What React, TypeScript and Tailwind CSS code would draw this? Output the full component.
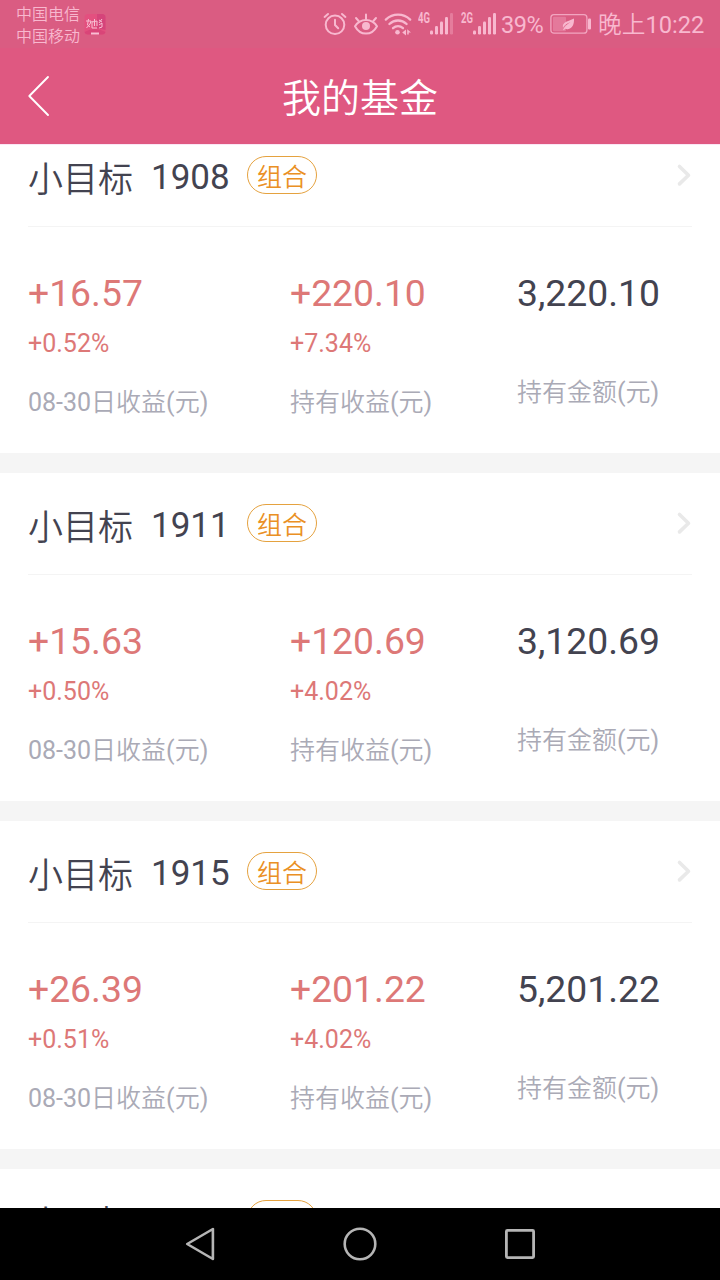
const SANS = "font-[Roboto,'Noto_Sans_CJK_SC_DemiLight','Noto_Sans_CJK_SC',sans-serif]";

type Fund = {
  code: string;
  daily: string;
  dailyRate: string;
  profit: string;
  profitRate: string;
  amount: string;
};

const funds: Fund[] = [
  { code: "1908", daily: "+16.57", dailyRate: "+0.52%", profit: "+220.10", profitRate: "+7.34%", amount: "3,220.10" },
  { code: "1911", daily: "+15.63", dailyRate: "+0.50%", profit: "+120.69", profitRate: "+4.02%", amount: "3,120.69" },
  { code: "1915", daily: "+26.39", dailyRate: "+0.51%", profit: "+201.22", profitRate: "+4.02%", amount: "5,201.22" },
];

function AlarmIcon() {
  return (
    <svg className="h-6 w-6 shrink-0" viewBox="0 0 24 24" fill="none" stroke="currentColor" strokeWidth="2" strokeLinecap="round">
      <circle cx="12" cy="12.8" r="9.3" />
      <path d="M12 7.8v5.2l3.2 3.2" />
      <path d="M1.6 4.9 5 2M22.4 4.9 19 2" />
    </svg>
  );
}

function EyeIcon() {
  return (
    <svg className="h-6 w-6 shrink-0" viewBox="0 0 24 24" fill="none" stroke="currentColor" strokeWidth="2" strokeLinecap="round">
      <path d="M1 14.2C4 9.6 7.8 8 12 8s8 1.600 11 6.200C20 19.800 16.200 21.600 12 21.600S4 19.800 1 14.200Z" />
      <circle cx="12" cy="14" r="4" fill="currentColor" stroke="none" />
      <path d="M12 7.500V2.400M4.600 9 2 6M19.400 9 22 6" />
    </svg>
  );
}

function WifiIcon() {
  return (
    <svg className="h-6 w-7 shrink-0" viewBox="0 0 28 24" fill="none" stroke="currentColor" strokeWidth="2.300" strokeLinecap="round">
      <path d="M1.800 7.600c7-6.600 17.400-6.600 24.400 0" />
      <path d="M5.400 12c5-4.700 12.200-4.700 17.200 0" />
      <path d="M9 16.200c3-2.700 7-2.700 10 0" />
      <circle cx="13.500" cy="20.300" r="2.300" fill="currentColor" stroke="none" />
      <path d="M22 17.400v6.200l-3.800-3.100ZM23.200 17.200l3.800 3.200h-2.300v2.200h-1.500Z" fill="currentColor" stroke="none" />
    </svg>
  );
}

function Signal({ label, weakLast }: { label: string; weakLast?: boolean }) {
  return (
    <div className="flex h-6 w-[37px] shrink-0 items-start">
      <span className="w-3 origin-left scale-x-[0.68] font-['Roboto'] text-[14px] leading-[13px] font-bold">{label}</span>
      <svg className="h-6 w-6 shrink-0" viewBox="0 0 24 24" fill="currentColor">
        <rect x="0" y="18.500" width="3" height="4" rx="1.200" />
        <rect x="5" y="14" width="3" height="8.500" rx="1.200" />
        <rect x="10" y="9.500" width="3" height="13" rx="1.200" />
        <rect x="15" y="5" width="3" height="17.500" rx="1.200" />
        <rect x="20" y="1" width="3" height="21.500" rx="1.200" opacity={weakLast ? 0.35 : 1} />
      </svg>
    </div>
  );
}

function BatteryIcon() {
  return (
    <svg className="h-6 w-[42px] shrink-0" viewBox="0 0 42 24" fill="currentColor">
      <rect x="0.900" y="2.700" width="36" height="18.500" rx="3" fill="none" stroke="currentColor" strokeWidth="1.300" opacity="0.800" />
      <rect x="3" y="4.700" width="13" height="14.500" rx="1" opacity="0.320" />
      <path d="M24 6.500c.3 5.500-1.500 10.200-6.200 10.700-1.200.1-2-.1-2.700-.4l-1.100 1.400-.9-.5C14.400 14.500 17 12 20.500 9.900 16.800 11.300 14.300 13.300 13 15.700c-1.100-5.700 4.800-6.200 11-9.200Z" />
      <rect x="38" y="6.500" width="3" height="11" rx="1" />
    </svg>
  );
}

function StatusBar() {
  return (
    <div className="flex h-12 shrink-0 bg-[#da5c82] text-[#f8b8cf]">
      <div className="w-[68px] pl-4 pt-1 text-[16px] leading-[22px] whitespace-nowrap">
        <div>中国电信</div>
        <div>中国移动</div>
      </div>
      <svg className="mt-[13px] ml-4 h-[23px] w-[23px] shrink-0" viewBox="0 0 23 23">
        <rect x="0.500" y="1" width="21" height="20.500" rx="3.500" fill="#e3507f" />
        <path d="M13 1h5a3.500 3.500 0 0 1 3.500 3.500V17L13 15Z" fill="#d5447a" />
        <path d="M0.500 19q10.500-6 21 0a3.500 3.500 0 0 1-3.500 2.500H4A3.500 3.500 0 0 1 .5 19Z" fill="#d94578" />
        <g fill="none" stroke="#f8bfd3" strokeWidth="1">
          <path d="M4.500 6 3.500 12l2.500 2M2 8h5l-1 3-3.500 4M8 8v7h5M8 9l5-1v5M10.500 6v7" />
          <path d="M15 7l3 2M18 6l-3 4M15 12l3-2v4l-3 1" />
          <path d="M7 20.500h8" strokeWidth="2" />
        </g>
      </svg>
      <div className="ml-auto flex pt-[12px] pr-[15px]">
        <AlarmIcon />
        <div className="ml-[7px] flex"><EyeIcon /></div>
        <div className="ml-[6px] flex"><WifiIcon /></div>
        <div className="ml-[6px] flex"><Signal label="4G" weakLast /></div>
        <div className="ml-[6px] flex"><Signal label="2G" /></div>
        <span className="ml-[3px] w-[43px] text-[23.500px] leading-[26px] tracking-[-0.4px] whitespace-nowrap">39%</span>
        <div className="ml-[6px] flex"><BatteryIcon /></div>
        <span className="ml-[6px] w-[107px] text-[23.700px] leading-[27px] whitespace-nowrap">晚上10:22</span>
      </div>
    </div>
  );
}

function TitleBar() {
  return (
    <header className="grid h-24 shrink-0 grid-cols-[120px_1fr_120px] items-center bg-[#df5881] text-white">
      <svg className="ml-[26px] h-11 w-6" viewBox="0 0 24 44" fill="none" stroke="currentColor" strokeWidth="1.900" strokeLinecap="round" strokeLinejoin="round">
        <path d="M22 3 3.300 22 22 41" />
      </svg>
      <h1 className="pt-[6px] text-center text-[39px] leading-[44px] font-normal">我的基金</h1>
    </header>
  );
}

function Column({ value, rate, label, className }: { value: string; rate?: string; label: string; className: string }) {
  return (
    <div className={`flex flex-col whitespace-nowrap ${className}`}>
      <span className={`text-[37.300px] leading-[42px] ${rate ? "text-[#dd7877]" : "text-[#434350]"}`}>{value}</span>
      {rate && <span className="mt-[17px] text-[25px] leading-[25px] text-[#dd7877]">{rate}</span>}
      <span className={`text-[25px] leading-7 text-[#aaaab6] ${rate ? "mt-[33px]" : "mt-[65px]"}`}>{label}</span>
    </div>
  );
}

function FundCard({ fund }: { fund: Fund }) {
  return (
    <section className="h-[328px] shrink-0 bg-white px-7">
      <div className="flex h-[102px] items-start border-b border-[#f4f4f4]">
        <h2 className="flex w-[219px] text-[35px] leading-10 font-normal text-[#434350]">
          <span className="mt-9 w-[123px]">小目标</span>
          <span className="mt-[33px]">{fund.code}</span>
        </h2>
        <span className="mt-[31px] h-[38px] w-[70px] rounded-full border border-[#e5a23f] text-center text-[25px] leading-[41px] text-[#ea9024]">组合</span>
        <svg className="mt-[38px] ml-auto h-6 w-4" viewBox="0 0 16 24" fill="none" stroke="#e9e9e9" strokeWidth="3.600" strokeLinecap="round" strokeLinejoin="round">
          <path d="m3.500 3.500 9 8.700-9 8.700" />
        </svg>
      </div>
      <div className="flex pt-[45px]">
        <Column className="w-[262px]" value={fund.daily} rate={fund.dailyRate} label="08-30日收益(元)" />
        <Column className="w-[227px]" value={fund.profit} rate={fund.profitRate} label="持有收益(元)" />
        <Column className="w-[150px]" value={fund.amount} label="持有金额(元)" />
      </div>
    </section>
  );
}

function PartialCard() {
  return (
    <section className="flex h-[39px] shrink-0 items-start overflow-hidden bg-white px-7">
      <h2 className="flex w-[219px] text-[35px] leading-10 font-normal text-[#434350]">
        <span className="mt-9 w-[123px]">小目标</span>
        <span className="mt-[33px]">1917</span>
      </h2>
      <span className="mt-[31px] h-[38px] w-[70px] rounded-full border border-[#e5a23f]" />
    </section>
  );
}

function NavigationBar() {
  return (
    <nav className="flex h-[72px] shrink-0 items-center justify-center gap-[124px] bg-black text-[#b5b5b5]">
      <svg className="h-9 w-9" viewBox="0 0 36 36" fill="none" stroke="currentColor" strokeWidth="2.600" strokeLinejoin="round">
        <path d="M5.200 18 30.900 3v30Z" />
      </svg>
      <svg className="h-9 w-9" viewBox="0 0 36 36" fill="none" stroke="currentColor" strokeWidth="2.600">
        <circle cx="18" cy="18" r="15.300" />
      </svg>
      <svg className="h-9 w-9" viewBox="0 0 36 36" fill="none" stroke="currentColor" strokeWidth="2.800">
        <rect x="4.400" y="4.400" width="27.200" height="27.200" rx="1" />
      </svg>
    </nav>
  );
}

export default function App() {
  return (
    <div className={`flex h-[1280px] w-[720px] flex-col overflow-hidden bg-white ${SANS}`}>
      <StatusBar />
      <TitleBar />
      <main className="min-h-0 flex-1 overflow-hidden border-t border-[#fbe6f5]">
        <div className="-mt-5 flex flex-col gap-5 bg-[#f5f5f5]">
          {funds.map((fund) => (
            <FundCard key={fund.code} fund={fund} />
          ))}
          <PartialCard />
        </div>
      </main>
      <NavigationBar />
    </div>
  );
}
